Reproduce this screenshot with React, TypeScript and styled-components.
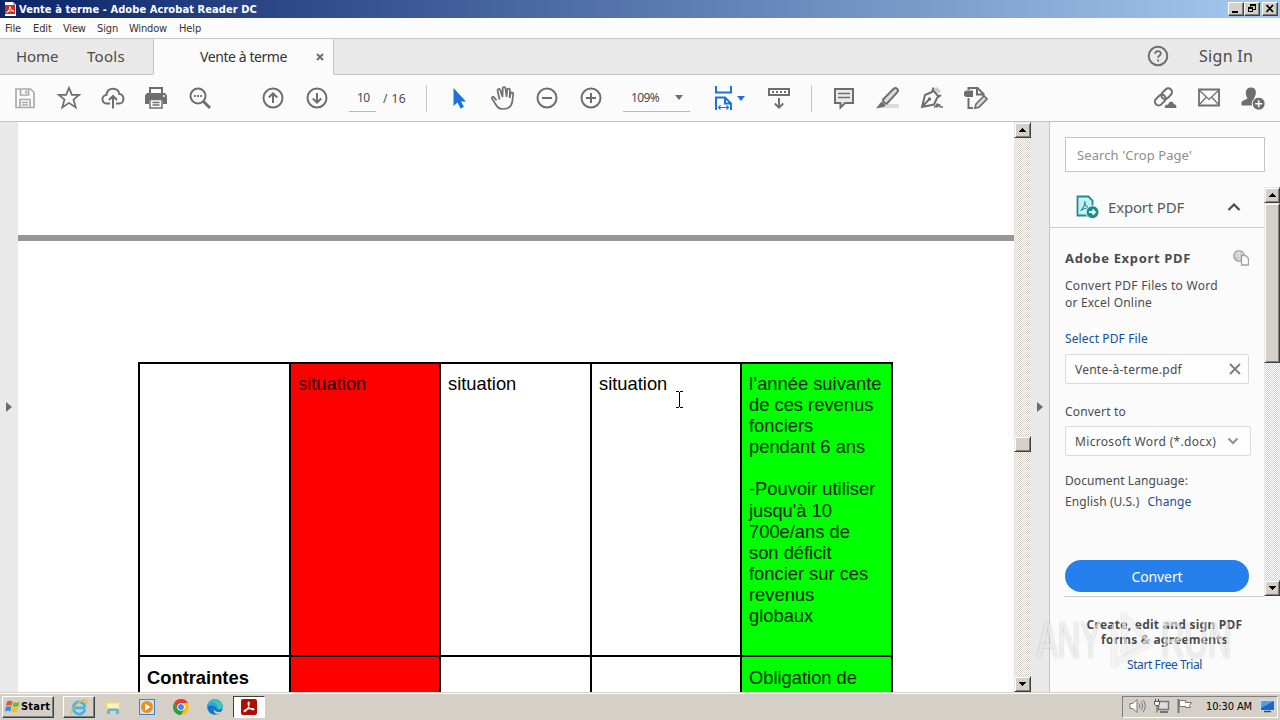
import { ReactNode } from 'react'
import styled, { createGlobalStyle } from 'styled-components'

const GlobalStyle = createGlobalStyle`
    * {
        box-sizing: border-box;
    }
    body {
        margin: 0;
        overflow: hidden;
        font-family: "Noto Sans", "Open Sans", sans-serif;
        color: #4b4b4b;
    }
    svg {
        display: block;
        flex-shrink: 0;
    }
`

const tahoma = '"DejaVu Sans Condensed", "DejaVu Sans", sans-serif'
const dither = 'repeating-conic-gradient(#ffffff 0% 25%, #d4d0c8 0% 50%) 0 0 / 2px 2px'

const Screen = styled.div`
    width: 1280px;
    height: 720px;
    display: flex;
    flex-direction: column;
    background: #fbfbfb;
    overflow: hidden;
`

const Text = styled.span<{ $size?: number; $gap?: number; $color?: string; $bold?: boolean }>`
    font-size: ${p => p.$size ?? 12}px;
    letter-spacing: ${p => p.$gap ?? 0}px;
    color: ${p => p.$color ?? '#4b4b4b'};
    font-weight: ${p => (p.$bold ? 700 : 400)};
    white-space: pre;
`

/* title bar */
const TitleBar = styled.div`
    height: 18px;
    flex-shrink: 0;
    display: flex;
    align-items: center;
    padding: 0 2px 0 4px;
    background: linear-gradient(90deg, #0a246a, #a6caf0);
    font-family: ${tahoma};
`
const Title = styled(Text)`
    flex: 1;
    padding: 1px 0 0 2px;
    line-height: 18px;
`
const WinButton = styled.div<{ $close?: boolean }>`
    width: 16px;
    height: 14px;
    margin-left: ${p => (p.$close ? 2 : 0)}px;
    background: #d4d0c8;
    border: 1px solid;
    border-color: #fff #404040 #404040 #fff;
    box-shadow: inset -1px -1px #808080;
`

/* menu */
const MenuBar = styled.div`
    height: 20px;
    flex-shrink: 0;
    display: flex;
    align-items: center;
    padding: 1px 0 0 5px;
    font-family: ${tahoma};
    background: #fcfcfc;
`
const MenuItem = styled(Text)<{ $w: number }>`
    width: ${p => p.$w}px;
    line-height: 19px;
`

/* tabs */
const TabBar = styled.div`
    height: 37px;
    flex-shrink: 0;
    display: flex;
    align-items: stretch;
    background: #e9e9e9;
    border-top: 1px solid #c8c8c8;
`
const TabCell = styled.div<{ $w?: number; $left?: number; $active?: boolean }>`
    ${p => (p.$w ? `width: ${p.$w}px;` : 'flex: 1;')}
    display: flex;
    align-items: center;
    padding: 0 0 ${p => (p.$active ? 0 : 2)}px ${p => p.$left ?? 0}px;
    background: ${p => (p.$active ? '#fbfbfb' : 'transparent')};
    border-bottom: 1px solid ${p => (p.$active ? '#fbfbfb' : '#c6c6c6')};
    border-left: ${p => (p.$active ? '1px solid #c6c6c6' : '0')};
    border-right: ${p => (p.$active ? '1px solid #c6c6c6' : '0')};
`
const TabLabel = styled(Text)<{ $w: number; $before?: number }>`
    width: ${p => p.$w}px;
    margin-left: ${p => p.$before ?? 0}px;
`

/* toolbar */
const Toolbar = styled.div`
    height: 47px;
    flex-shrink: 0;
    display: flex;
    align-items: center;
    padding-left: 3px;
    border-bottom: 1px solid #c3c3c3;
    background: #fbfbfb;
`
const Tool = styled.div<{ $w?: number; $before?: number }>`
    width: ${p => p.$w ?? 44}px;
    margin-left: ${p => p.$before ?? 0}px;
    display: flex;
    justify-content: center;
    align-items: center;
    flex-shrink: 0;
`
const Field = styled.div<{ $w: number; $before: number; $left: number }>`
    width: ${p => p.$w}px;
    height: 27px;
    margin-left: ${p => p.$before}px;
    padding-left: ${p => p.$left}px;
    display: flex;
    align-items: center;
    border-bottom: 1px solid #b9b9b9;
`
const PageTotal = styled.div`
    width: 50px;
    padding-left: 7px;
    display: flex;
`
const Caret = styled.i<{ $color: string; $before: number }>`
    margin-left: ${p => p.$before}px;
    border: 4px solid transparent;
    border-bottom: 0;
    border-top: 5px solid ${p => p.$color};
`
const Divider = styled.div<{ $before: number }>`
    width: 1px;
    height: 27px;
    margin-left: ${p => p.$before}px;
    background: #c6c6c6;
`

/* workspace */
const Workspace = styled.div`
    height: 570px;
    flex-shrink: 0;
    display: flex;
`
const Strip = styled.div<{ $w: number; $edge?: boolean }>`
    width: ${p => p.$w}px;
    display: flex;
    align-items: center;
    justify-content: center;
    padding-bottom: 1px;
    background: #e9e9e9;
    border-right: ${p => (p.$edge ? '1px solid #c6c6c6' : '0')};
`
const StripArrow = styled.i`
    border: 5px solid transparent;
    border-left: 6px solid #6c6c6c;
    border-right: 0;
`
const Document = styled.div`
    width: 996px;
    display: flex;
    flex-direction: column;
    background: #fff;
    overflow: hidden;
    position: relative;
`
const PreviousPage = styled.div`
    height: 113px;
    flex-shrink: 0;
`
const PageBreak = styled.div`
    height: 6px;
    flex-shrink: 0;
    background: #999699;
`
const Table = styled.div`
    margin: 121px 0 0 120px;
    width: 755px;
    display: grid;
    grid-template-columns: 151px 150px 151px 150px 151px;
    grid-template-rows: 293px 60px;
    border-right: 2px solid #000;
    font-family: "Liberation Sans", Arial, sans-serif;
    font-size: 18.33px;
    line-height: 21.1px;
    color: #000;
`
const Cell = styled.div<{ $bg?: string; $bold?: boolean; $top?: number }>`
    padding: ${p => p.$top ?? 9}px 0 0 7px;
    border-top: 2px solid #000;
    border-left: 2px solid #000;
    background: ${p => p.$bg ?? '#fff'};
    color: ${p => (p.$bg === '#f00' ? '#300' : p.$bg ? '#002a00' : '#000')};
    font-weight: ${p => (p.$bold ? 700 : 400)};
    white-space: pre;
`
const TextCursor = styled.div`
    position: absolute;
    left: 657px;
    top: 269px;
`

/* classic scrollbars */
const Scroll = styled.div<{ $w: number; $h: number }>`
    width: ${p => p.$w}px;
    height: ${p => p.$h}px;
    display: flex;
    flex-direction: column;
    flex-shrink: 0;
    background: ${dither};
`
const ScrollSpace = styled.div<{ $h?: number }>`
    ${p => (p.$h === undefined ? 'flex: 1;' : `height: ${p.$h}px;`)}
`
const ScrollButton = styled.div<{ $h: number }>`
    height: ${p => p.$h}px;
    display: flex;
    align-items: center;
    justify-content: center;
    background: #d4d0c8;
    border: 1px solid;
    border-color: #e8e6e0 #404040 #404040 #e8e6e0;
    box-shadow: inset 1px 1px #fff, inset -1px -1px #808080;
`

/* right hand pane */
const Pane = styled.div`
    width: 230px;
    display: flex;
    flex-direction: column;
    padding-top: 15px;
    background: #fbfbfb;
    position: relative;
`
const SearchBox = styled.div`
    height: 35px;
    width: 200px;
    margin-left: 15px;
    padding-left: 11px;
    display: flex;
    align-items: center;
    flex-shrink: 0;
    background: #fff;
    border: 1px solid #c4c4c4;
`
const PaneBody = styled.div`
    display: flex;
    height: 410px;
    margin-top: 15px;
    flex-shrink: 0;
`
const PaneContent = styled.div`
    width: 214px;
    display: flex;
    flex-direction: column;
`
const ExportHeader = styled.div`
    height: 41px;
    flex-shrink: 0;
    display: flex;
    align-items: center;
    padding-left: 25px;
    border-bottom: 1px solid #cdcdcd;
`
const HeaderText = styled(Text)`
    width: 119px;
    margin-left: 9px;
`
const ExportForm = styled.div`
    display: flex;
    flex-direction: column;
    padding-left: 15px;
`
const HeadText = styled(Text)`
    width: 168px;
`
const ChangeLink = styled(Text)`
    margin-left: 8px;
`
const Line = styled.div<{ $h: number; $top?: number }>`
    height: ${p => p.$h}px;
    margin-top: ${p => p.$top ?? 0}px;
    display: flex;
    align-items: center;
    flex-shrink: 0;
`
const Box = styled.div<{ $w: number; $top: number; $right: number }>`
    width: ${p => p.$w}px;
    height: 30px;
    margin-top: ${p => p.$top}px;
    padding: 0 ${p => p.$right}px 0 9px;
    display: flex;
    align-items: center;
    justify-content: space-between;
    border: 1px solid #dadada;
    border-radius: 2px;
    background: #fdfdfd;
`
const ConvertButton = styled.div`
    width: 184px;
    height: 32px;
    margin-top: 50px;
    border-radius: 16px;
    background: #2680eb;
    display: flex;
    align-items: center;
    justify-content: center;
    flex-shrink: 0;
`
const Promo = styled.div`
    width: 200px;
    margin: -1px 0 0 14px;
    padding: 20px 0 0 1px;
    border-top: 1px solid #c8c8c8;
    display: flex;
    flex-direction: column;
    align-items: center;
    line-height: 15px;
`
const Trial = styled(Text)`
    margin-top: 10px;
`
const Watermark = styled.div`
    position: absolute;
    left: -13px;
    top: 484px;
    display: flex;
    align-items: center;
    height: 68px;
    font-family: "Liberation Sans", Arial, sans-serif;
    font-size: 52px;
    color: rgba(255, 255, 255, 0.6);
    text-shadow: 0 0 3px rgba(0, 0, 0, 0.22);
    svg {
        margin: 0 3px 0 9px;
        filter: drop-shadow(0 0 1.5px rgba(0, 0, 0, 0.25));
    }
`
const MarkWord = styled.span<{ $w: number; $natural: number }>`
    width: ${p => p.$w}px;
    transform: scaleX(${p => p.$w / p.$natural});
    transform-origin: left;
`

/* taskbar */
const Taskbar = styled.div`
    height: 28px;
    flex-shrink: 0;
    display: flex;
    align-items: center;
    padding: 1px 2px 1px;
    background: #d4d0c8;
    border-top: 1px solid #d4d0c8;
    box-shadow: inset 0 1px #fff;
    font-family: ${tahoma};
`
const StartButton = styled.div`
    width: 52px;
    height: 22px;
    display: flex;
    align-items: center;
    padding-left: 2px;
    gap: 1px;
    border: 1px solid;
    border-color: #fff #404040 #404040 #fff;
    box-shadow: inset -1px -1px #808080;
`
const TaskButton = styled.div<{ $before: number; $kind?: 'up' | 'down' }>`
    width: 32px;
    height: 22px;
    margin-left: ${p => p.$before}px;
    display: flex;
    align-items: center;
    justify-content: center;
    border: 1px solid transparent;
    ${p => p.$kind === 'up' && 'border-color: #fff #404040 #404040 #fff; box-shadow: inset -1px -1px #808080;'}
    ${p => p.$kind === 'down' && 'border-color: #404040 #fff #fff #404040; background: #fff;'}
`
const Tray = styled.div`
    height: 22px;
    width: 156px;
    margin-left: auto;
    display: flex;
    align-items: center;
    padding-left: 6px;
    border: 1px solid;
    border-color: #808080 #fff #fff #808080;
`
const TrayItem = styled.div<{ $w: number }>`
    width: ${p => p.$w}px;
    line-height: 18px;
    padding-bottom: 1px;
`

interface IGlyph {
    children: ReactNode
    size?: number
    color?: string
    width?: number
}

const Glyph = ({ children, size = 24, color = '#6e6e6e', width = 2 }: IGlyph) => (
    <svg width={size} height={size} viewBox={`0 0 ${size} ${size}`} fill="none" stroke={color} strokeWidth={width}>
        {children}
    </svg>
)

const ScrollArrow = ({ up }: { up?: boolean }) => (
    <svg width="7" height="4" viewBox="0 0 7 4" shapeRendering="crispEdges">
        <path d={up ? 'M3 0h1v1h1v1h1v1h1v1H0V3h1V2h1V1h1z' : 'M0 0h7v1H6v1H5v1H4v1H3V3H2V2H1V1H0z'} fill="#000" />
    </svg>
)

const menu: [string, number, number][] = [
    ['File', 28, -0.12],
    ['Edit', 30, -0.1],
    ['View', 34, -0.2],
    ['Sign', 32, -0.1],
    ['Window', 50, -0.17],
    ['Help', 30, -0.1],
]

const deduction = `l’année suivante
de ces revenus
fonciers
pendant 6 ans

-Pouvoir utiliser
jusqu'à 10
700e/ans de
son déficit
foncier sur ces
revenus
globaux`

const TopBars = () => (
    <>
        <TitleBar>
            <svg width="13" height="16" viewBox="0 0 13 16">
                <path d="M1 1h8l3 3v11H1z" fill="#fff" />
                <path d="M9 1v3h3z" fill="#e4a9a3" />
                <rect x="1" y="4" width="10" height="9" fill="#cf2b20" />
                <path d="M2.500 11.500c2-1 3.500-4 3.500-6 0 2 2 4.500 4 4.500-2.500-.5-5-.3-7.500 1.500z" stroke="#fff" fill="none" strokeWidth=".9" />
            </svg>
            <Title $size={11} $gap={0.08} $bold $color="#fff">Vente à terme - Adobe Acrobat Reader DC</Title>
            <WinButton>
                <svg width="14" height="12"><path d="M3 8h6v2H3z" /></svg>
            </WinButton>
            <WinButton>
                <svg width="14" height="12" fill="none" stroke="#000" shapeRendering="crispEdges">
                    <path d="M5.500 4V1.500h5v5H8M5 2h6M3.500 4.500h4v4h-4zM3 5h5" />
                </svg>
            </WinButton>
            <WinButton $close>
                <svg width="14" height="12"><path d="M3.500 2l6.500 7M10 2L3.500 9" stroke="#000" strokeWidth="1.7" /></svg>
            </WinButton>
        </TitleBar>
        <MenuBar>
            {menu.map(([name, w, gap]) => (
                <MenuItem key={name} $w={w} $size={11} $gap={gap} $color="#333">{name}</MenuItem>
            ))}
        </MenuBar>
        <TabBar>
            <TabCell $w={153} $left={16}>
                <TabLabel $w={71} $size={15} $gap={-0.1}>Home</TabLabel>
                <TabLabel $w={50} $size={15} $gap={0.3}>Tools</TabLabel>
            </TabCell>
            <TabCell $w={181} $left={46} $active>
                <TabLabel $w={116} $size={14} $gap={-0.42} $color="#323232">Vente à terme</TabLabel>
                <Glyph size={8}><path d="M1 1l6 6M7 1L1 7" /></Glyph>
            </TabCell>
            <TabCell $left={812}>
                <Glyph size={24}>
                    <circle cx="12" cy="12" r="9.300" />
                    <path d="M9.200 9.800c0-3.600 5.600-3.500 5.600-.4 0 2.100-2.700 2-2.700 4.300M12.100 15.500v2" strokeWidth="1.800" />
                </Glyph>
                <TabLabel $w={60} $before={29} $size={16} $gap={0.3}>Sign In</TabLabel>
            </TabCell>
        </TabBar>
    </>
)

const Tools = () => (
    <Toolbar>
        <Tool>
            <Glyph color="#ababab" width={1.7}>
                <path d="M3 3h14.500L21 6.500V21.500H3zM7.500 3v6h8V3M13 4.500v3M7 21v-7.500h10V21M9 16.500h6M9 19h6" />
            </Glyph>
        </Tool>
        <Tool>
            <Glyph width={1.7}>
                <path d="M12 1.800l2.900 7h7.300l-5.700 4.700 2.300 7.900-6.800-4.500-6.800 4.500 2.300-7.900L1.800 8.800h7.300z" />
            </Glyph>
        </Tool>
        <Tool>
            <Glyph>
                <path d="M9 17.500H6a4.300 4.300 0 01-.5-8.600C6 4.500 9 2.800 12 2.800c3.300 0 5.800 2 6.300 5.300 5.500.2 5.500 9.400 0 9.400H15M12 22.500v-12M8 14l4-4 4 4" />
            </Glyph>
        </Tool>
        <Tool $w={42}>
            <Glyph>
                <path d="M6 8V2h12v6" />
                <path d="M1 9.500L3 7h18l2 2.500V18h-4v-4H5v4H1z" fill="#6e6e6e" stroke="none" />
                <path d="M6 13.500h12V22H6zM8.500 16.500h7M8.500 19h7" fill="#fbfbfb" strokeWidth="1.500" />
                <circle cx="20" cy="10" r="1" fill="#fff" stroke="none" />
            </Glyph>
        </Tool>
        <Tool $w={46}>
            <Glyph>
                <circle cx="10" cy="10" r="7.500" />
                <path d="M15.500 15.500l6.500 6.500" strokeWidth="3" />
                <path d="M6 10h1.800M9.100 10h1.800M12.200 10h1.800" />
            </Glyph>
        </Tool>
        <Tool $before={28}>
            <Glyph><circle cx="12" cy="12" r="9.500" /><path d="M12 17V7.500M7.800 11.500L12 7.300l4.200 4.200" /></Glyph>
        </Tool>
        <Tool>
            <Glyph><circle cx="12" cy="12" r="9.500" /><path d="M12 7v9.500M7.800 12.500l4.200 4.200 4.200-4.200" /></Glyph>
        </Tool>
        <Field $w={27} $before={10} $left={8}><Text $gap={-0.6}>10</Text></Field>
        <PageTotal><Text $gap={0.42}>/ 16</Text></PageTotal>
        <Divider $before={0} />
        <Tool $before={10}>
            <Glyph><path d="M6.500 2v18l4-3.500 3 6 3.500-1.500-3-5.500h5z" fill="#1e73d8" stroke="none" /></Glyph>
        </Tool>
        <Tool>
            <Glyph width={1.7}>
                <path d="M5.500 14.500L3 11.300c-1.200-1.300-2.700.2-1.800 1.600l4.200 6.600c1.200 2 3.400 3.500 6.600 3.500 5.500 0 8.500-2.500 9.300-7.500l.9-7.500c.1-2-2.300-2-2.600-.4l-.9 4.400.2-8c0-1.900-2.700-1.900-2.800 0L15.600 11 14.500 2.600c-.2-1.900-2.800-1.800-2.800 0L11.500 11 9.300 4c-.6-1.700-3.100-1.200-2.700.7l2 8.800" />
            </Glyph>
        </Tool>
        <Tool>
            <Glyph><circle cx="12" cy="12" r="9.500" /><path d="M7 12h10" /></Glyph>
        </Tool>
        <Tool>
            <Glyph><circle cx="12" cy="12" r="9.500" /><path d="M7 12h10M12 7v10" /></Glyph>
        </Tool>
        <Field $w={67} $before={10} $left={8}>
            <Text $gap={-0.64}>109%</Text>
            <Caret $color="#6e6e6e" $before={16} />
        </Field>
        <Tool $w={34} $before={21}>
            <Glyph color="#1e73d8">
                <path d="M4 0v6.500h15V0M4 24V11.500h9l6 6V24M13 11.500v6h6" />
                <path d="M7 21.500h9M8.500 19.500l-2 2 2 2M14.500 19.500l2 2-2 2" strokeWidth="1.200" />
            </Glyph>
            <Caret $color="#1e73d8" $before={1} />
        </Tool>
        <Tool $before={12}>
            <Glyph>
                <path d="M2 3h20v6H2zM12 12v9.500M7.800 17.500l4.200 4.200 4.200-4.200" />
                <path d="M5 6h14" strokeDasharray="2 2" />
            </Glyph>
        </Tool>
        <Divider $before={10} />
        <Tool $before={10}>
            <Glyph>
                <path d="M3 3h18v14h-8l-4.500 4.500V17H3z" fill="#ececec" />
                <path d="M6 7.500h12M6 11.500h12" strokeWidth="1.500" />
            </Glyph>
        </Tool>
        <Tool>
            <Glyph>
                <path d="M9 18h14v4H7z" fill="#dcdcdc" stroke="none" />
                <path d="M7 13.500L17.500 3c1-1 2.500-1.200 3.600-.3 1 1 .9 2.600 0 3.700L11 17.500c-1.300.7-4.500-2-4-4z" fill="#dedede" />
                <path d="M5.500 15.500l4 3.500-1.500 2-8 1.500z" fill="#6e6e6e" stroke="none" />
            </Glyph>
        </Tool>
        <Tool>
            <Glyph>
                <path d="M14 3l4.500 4.500 2.500-2.500-4.500-4z" fill="#ccc" stroke="none" />
                <path d="M13.500 1.500L12 6l-7 3-3 12 12-2.500 3-6.500 4-3M2 21l7-7.500M12.500 3.500l6 7" strokeWidth="2" />
                <circle cx="9.500" cy="13" r="1.700" fill="#6e6e6e" stroke="none" />
                <path d="M14 21.500c2-.5 3-4 3.500-3.500s-1 3-.3 3c1 0 1-2.500 2-2.500s.2 2.500 1.200 2.500H23" strokeWidth="1.600" />
            </Glyph>
        </Tool>
        <Tool>
            <Glyph>
                <path d="M4.500 4V2h9l6 6v2.500M13 2v6.500h6M4.500 12v10H9" />
                <path d="M0 6l2-1.500h7V11H2L0 9.500z" fill="#6e6e6e" stroke="none" />
                <path d="M12 18l8-8 3 3-8 8.200-4 1z" fill="#ddd" strokeWidth="1.700" />
            </Glyph>
        </Tool>
        <Tool $before={145}>
            <Glyph>
                <g transform="rotate(-45 11 10)">
                    <rect x="-.5" y="6.500" width="12" height="7.500" rx="3.700" />
                    <rect x="8.500" y="6.500" width="12" height="7.500" rx="3.700" />
                </g>
                <path d="M12 22.500c-1.500-3 1-4.700 2.800-4.200 1-4.300 5.800-3.700 6.200-.6 3 .3 3 3.500 2.700 4.800z" fill="#6e6e6e" stroke="#fbfbfb" strokeWidth="1" />
            </Glyph>
        </Tool>
        <Tool>
            <Glyph width={1.8}>
                <path d="M2 3.500h20v16H2z" />
                <path d="M2 4l10 9.500L22 4M2 19l7.500-8M22 19l-7.500-8" strokeWidth="1.200" />
            </Glyph>
        </Tool>
        <Tool>
            <Glyph>
                <path d="M.5 19.500v-3c0-2 6-3 6-4.500C4 9 3.500 1.500 10 1.500S15.500 9 13 12c0 1.500 3 2 4 3.500v4z" fill="#6e6e6e" stroke="none" />
                <circle cx="17.700" cy="17.700" r="6.500" fill="#6e6e6e" stroke="#fbfbfb" strokeWidth="1" />
                <path d="M14.200 17.700h7M17.700 14.200v7" stroke="#fff" strokeWidth="1.500" />
            </Glyph>
        </Tool>
    </Toolbar>
)

const DocumentView = () => (
    <Document>
        <PreviousPage />
        <PageBreak />
        <Table>
            <Cell />
            <Cell $bg="#f00">situation</Cell>
            <Cell>situation</Cell>
            <Cell>situation</Cell>
            <Cell $bg="#0f0">{deduction}</Cell>
            <Cell $top={10} $bold>Contraintes</Cell>
            <Cell $bg="#f00" />
            <Cell />
            <Cell />
            <Cell $top={10} $bg="#0f0">Obligation de</Cell>
        </Table>
        <TextCursor>
            <svg width="9" height="17" viewBox="0 0 9 17" stroke="#000" fill="none" shapeRendering="crispEdges">
                <path d="M1 .5h3M5 .5h3M4.500 1v15M1 16.500h3M5 16.500h3" />
            </svg>
        </TextCursor>
    </Document>
)

const ExportPane = () => (
    <Pane>
        <SearchBox>
            <Text $size={13} $gap={0.09} $color="#8e8e8e">Search 'Crop Page'</Text>
        </SearchBox>
        <PaneBody>
            <PaneContent>
                <ExportHeader>
                    <Glyph size={24} color="#1a8f8a" width={1.8}>
                        <path d="M2.500 1.500h11l4 4V20.500h-15z" fill="#c9eef5" />
                        <path d="M5.500 15.500c3-1.500 4.500-6 4.300-9.500 0 4 2.200 6.500 5 7-3.500-.3-6.500.8-9.300 2.500z" strokeWidth="1.100" />
                        <circle cx="17.500" cy="17.200" r="6.500" fill="#1a8f8a" stroke="#fbfbfb" strokeWidth="1" />
                        <path d="M14 17.200h6M17.500 14.700l2.500 2.500-2.500 2.500" stroke="#fff" strokeWidth="1.800" />
                    </Glyph>
                    <HeaderText $size={15} $gap={-0.19} $color="#5a5a5a">Export PDF</HeaderText>
                    <Glyph size={14} color="#4b4b4b" width={2.2}><path d="M1.500 10L7 4.500l5.500 5.500" /></Glyph>
                </ExportHeader>
                <ExportForm>
                    <Line $h={20} $top={20}>
                        <HeadText $size={13} $gap={0.66} $bold>Adobe Export PDF</HeadText>
                        <Glyph size={16} color="#a2a2a2" width={1.3}>
                            <circle cx="6" cy="6" r="5.300" fill="#c4c4c4" />
                            <path d="M1 6h10M6 1v10M2 3.500h8" stroke="#eee" strokeWidth=".8" />
                            <path d="M8.500 5.500h4l3 3v6.500h-7z" fill="#fbfbfb" />
                        </Glyph>
                    </Line>
                    <Line $h={17} $top={9}><Text $gap={0.28}>Convert PDF Files to Word</Text></Line>
                    <Line $h={17}><Text $gap={0.2}>or Excel Online</Text></Line>
                    <Line $h={17} $top={19}><Text $gap={0.13} $color="#1150a0">Select PDF File</Text></Line>
                    <Box $w={184} $top={7} $right={7}>
                        <Text $gap={0.24}>Vente-à-terme.pdf</Text>
                        <Glyph size={12} color="#7d7d7d" width={1.8}><path d="M1 1l10 10M11 1L1 11" /></Glyph>
                    </Box>
                    <Line $h={17} $top={19}><Text $gap={0.19}>Convert to</Text></Line>
                    <Box $w={186} $top={6} $right={11}>
                        <Text $gap={0.33}>Microsoft Word (*.docx)</Text>
                        <Glyph size={12} color="#8e8e8e"><path d="M1.500 3.500L6 8l4.500-4.500" /></Glyph>
                    </Box>
                    <Line $h={17} $top={16}><Text $gap={0.09}>Document Language:</Text></Line>
                    <Line $h={17} $top={4}>
                        <Text $gap={0.12}>English (U.S.)</Text>
                        <ChangeLink $gap={0.12} $color="#1150a0">Change</ChangeLink>
                    </Line>
                    <ConvertButton><Text $size={14} $gap={-0.12} $color="#fff">Convert</Text></ConvertButton>
                </ExportForm>
            </PaneContent>
            <Scroll $w={16} $h={409}>
                <ScrollButton $h={16}><ScrollArrow up /></ScrollButton>
                <ScrollButton $h={160} />
                <ScrollSpace />
                <ScrollButton $h={16}><ScrollArrow /></ScrollButton>
            </Scroll>
        </PaneBody>
        <Promo>
            <Text $gap={0.26} $bold>Create, edit and sign PDF</Text>
            <Text $gap={0.24} $bold>forms & agreements</Text>
            <Trial $gap={-0.41} $color="#1150a0">Start Free Trial</Trial>
        </Promo>
        <Watermark>
            <MarkWord $w={64} $natural={107}>ANY</MarkWord>
            <svg width="48" height="64" viewBox="0 0 48 64" fill="none" stroke="rgba(255,255,255,.6)" strokeWidth="4">
                <path d="M4 16v40l36-21L14 8v36l22-10" />
            </svg>
            <MarkWord $w={70} $natural={112}>RUN</MarkWord>
        </Watermark>
    </Pane>
)

const WindowsTaskbar = () => (
    <Taskbar>
        <StartButton>
            <svg width="15" height="15" viewBox="0 0 15 15">
                <path d="M2 2.500c2-1.300 4-1 5.500 0L6.500 7C5 6 3 6 1 7z" fill="#e8552d" />
                <path d="M8.500 3c2 1 4 1 6-.3L13.500 7c-2 1.300-4 1.300-6 .3z" fill="#77b82a" />
                <path d="M.8 8c2-1.200 4-1 5.500 0l-1 4.500c-1.500-1-3.500-1-5.300 0z" fill="#3a8de0" />
                <path d="M7.300 8.300c2 1 4 1 6-.2l-1 4.400c-2 1.300-4 1.200-6 .2z" fill="#f8bd23" />
            </svg>
            <Text $size={11} $gap={0.2} $bold $color="#000">Start</Text>
        </StartButton>
        <TaskButton $before={9} $kind="up">
            <svg width="18" height="18" viewBox="0 0 18 18" fill="none">
                <path d="M15 11.500A6 6 0 1 1 15 8.500M4 9.800h11.300" stroke="#43b4ec" strokeWidth="2.700" />
                <path d="M2 16C-1 13 9 2 15 2c3 0 1.500 3.500.5 4.500" stroke="#e9b93a" strokeWidth="1.300" />
            </svg>
        </TaskButton>
        <TaskButton $before={2}>
            <svg width="16" height="16" viewBox="0 0 16 16">
                <path d="M1 2h5l1 1.500h7V13H1z" fill="#f4d672" />
                <path d="M2 4.500h12V9H2z" fill="#fff4bf" />
                <path d="M2 15v-4c0-2 12-2 12 0v4h-3v-3H5v3z" fill="#61b6e6" />
            </svg>
        </TaskButton>
        <TaskButton $before={2}>
            <svg width="16" height="16" viewBox="0 0 16 16">
                <rect x=".5" y=".5" width="15" height="15" fill="#cfe2f3" stroke="#3d86c6" />
                <circle cx="8" cy="8" r="6" fill="#f28a1c" />
                <path d="M6 4.500v7L11.500 8z" fill="#fff" />
            </svg>
        </TaskButton>
        <TaskButton $before={2}>
            <svg width="16" height="16" viewBox="0 0 16 16">
                <circle cx="8" cy="8" r="8" fill="#fbc116" />
                <path d="M1.070 4A8 8 0 0 1 14.930 4H8L4.540 10z" fill="#e33b2e" />
                <path d="M1.070 4A8 8 0 0 0 8 16l3.460-6H4.540z" fill="#2a9f48" />
                <circle cx="8" cy="8" r="3.800" fill="#fff" />
                <circle cx="8" cy="8" r="2.900" fill="#4285f4" />
            </svg>
        </TaskButton>
        <TaskButton $before={2}>
            <svg width="16" height="16" viewBox="0 0 16 16">
                <circle cx="8" cy="8" r="7.800" fill="#1377c9" />
                <path d="M.3 7C1.500-1.500 15-2 15.800 7c.2 3-2.500 4-5.300 3.300C11 7 4 3.500.3 7z" fill="#3cc6b4" />
                <path d="M.3 7C1.500 1 10 3 10.500 7.500c0 .8-.3 1.300-.8 1.800C8.500 6 3 6 .3 7z" fill="#2ea7e0" />
                <path d="M7 9c-1 3 3.500 5 7.500 3.700-3 3.500-9 2.800-7.500-3.700z" fill="#d4d0c8" />
            </svg>
        </TaskButton>
        <TaskButton $before={2} $kind="down">
            <svg width="16" height="16" viewBox="0 0 16 16">
                <rect width="16" height="16" rx="2" fill="#b30b00" />
                <path
                    d="M3.200 12.600c-.9-.8 1.500-2.400 5.300-3 2.600-.4 4.700 0 4.300.9-.5 1-3.300-.2-4.700-2.300C6.800 6.200 6.900 3 7.800 3c1 0 .3 3.700-1.200 6.400-1.300 2.500-2.700 3.800-3.400 3.200z"
                    fill="none"
                    stroke="#fff"
                    strokeWidth="1.100"
                />
            </svg>
        </TaskButton>
        <Tray>
            <TrayItem $w={25}>
                <svg width="17" height="16" viewBox="0 0 17 16" fill="none" stroke="#777">
                    <path d="M1 5.500h3l4-4v13l-4-4H1z" fill="#fff" />
                    <path d="M10 5.500c1 1.500 1 3.500 0 5M12 3.500c2 3 2 6 0 9M14 2c3 4 3 8 0 12" />
                </svg>
            </TrayItem>
            <TrayItem $w={23}>
                <svg width="16" height="16" viewBox="0 0 16 16" fill="none" stroke="#555">
                    <path d="M4.500 3.500h10v8h-10z" fill="#ddd" stroke="#777" strokeWidth="1.500" />
                    <path d="M6 14h8" strokeWidth="1.500" />
                    <path d="M.5 3.500h5v3l-1.500 1h-2l-1.500-1zM1.500 1v2M4.500 1v2M3 8v6.500" fill="#fff" />
                </svg>
            </TrayItem>
            <TrayItem $w={29}>
                <svg width="17" height="16" viewBox="0 0 17 16" fill="#fff" stroke="#777">
                    <path d="M1.500 1v14" strokeWidth="2" />
                    <path d="M2.500 2.500h6v2h6l-2 3 1 2h-5v-1h-6z" />
                </svg>
            </TrayItem>
            <TrayItem $w={54}><Text $size={11} $gap={-0.12} $color="#000">10:30 AM</Text></TrayItem>
            <svg width="15" height="13" viewBox="0 0 15 13">
                <rect x=".5" y=".5" width="14" height="10" fill="#1d66c9" stroke="#cfdcec" />
                <path d="M1 1h13L1 8z" fill="#5b9be6" />
                <path d="M4 11.500h7" stroke="#444" strokeWidth="1.500" />
            </svg>
        </Tray>
    </Taskbar>
)

const App = () => {
    return (
        <Screen>
            <GlobalStyle />
            <TopBars />
            <Tools />
            <Workspace>
                <Strip $w={18}><StripArrow /></Strip>
                <DocumentView />
                <Scroll $w={17} $h={570}>
                    <ScrollButton $h={16}><ScrollArrow up /></ScrollButton>
                    <ScrollSpace $h={298} />
                    <ScrollButton $h={16} />
                    <ScrollSpace />
                    <ScrollButton $h={16}><ScrollArrow /></ScrollButton>
                </Scroll>
                <Strip $w={19} $edge><StripArrow /></Strip>
                <ExportPane />
            </Workspace>
            <WindowsTaskbar />
        </Screen>
    )
}

export default App
